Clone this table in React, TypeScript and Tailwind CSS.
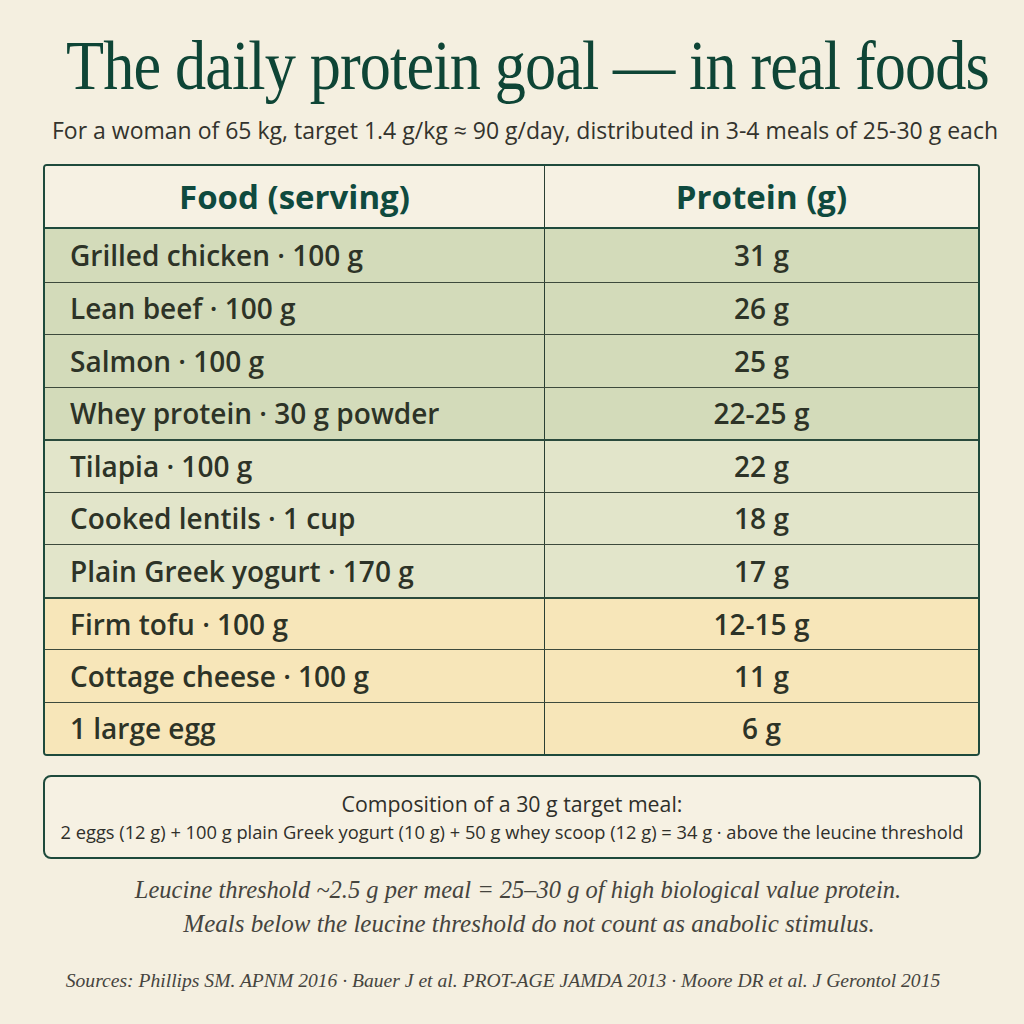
import React from "react";

const rows: { food: string; val: string; bg: string; sep?: boolean }[] = [
  { food: "Grilled chicken · 100 g", val: "31 g", bg: "bg-[#d3dbba]" },
  { food: "Lean beef · 100 g", val: "26 g", bg: "bg-[#d3dbba]" },
  { food: "Salmon · 100 g", val: "25 g", bg: "bg-[#d3dbba]" },
  { food: "Whey protein · 30 g powder", val: "22-25 g", bg: "bg-[#d3dbba]" },
  { food: "Tilapia · 100 g", val: "22 g", bg: "bg-[#e2e5ca]", sep: true },
  { food: "Cooked lentils · 1 cup", val: "18 g", bg: "bg-[#e2e5ca]" },
  { food: "Plain Greek yogurt · 170 g", val: "17 g", bg: "bg-[#e2e5ca]" },
  { food: "Firm tofu · 100 g", val: "12-15 g", bg: "bg-[#f7e6b9]", sep: true },
  { food: "Cottage cheese · 100 g", val: "11 g", bg: "bg-[#f7e6b9]" },
  { food: "1 large egg", val: "6 g", bg: "bg-[#f7e6b9]" },
];

export default function App() {
  return (
    <div className="w-[1024px] h-[1024px] bg-[#f4efe0] flex flex-col items-center overflow-hidden">
      <h1 className="mt-[28px] whitespace-nowrap text-[70px] leading-[76px] text-[#0e4536] font-['Liberation_Serif',serif] tracking-[-1px] inline-block scale-x-[0.89] ml-[30px]">
        The daily protein goal — in real foods
      </h1>
      <p className="mt-[12px] ml-[26px] whitespace-nowrap text-[23px] leading-[28px] font-medium text-[#33332d] font-['Open_Sans',sans-serif]">
        For a woman of 65 kg, target 1.4 g/kg ≈ 90 g/day, distributed in 3-4 meals of 25-30 g each
      </p>

      <div className="mt-[20px] w-[937px] ml-[-1px] border-2 border-[#1e4a3c] rounded-[4px] overflow-hidden font-['Open_Sans',sans-serif]">
        <div className="flex h-[63px] bg-[#f6f1e3] border-b-2 border-[#1e4a3c]">
          <div className="w-[500px] border-r-[1.5px] border-[#2a3f33] flex items-center justify-center text-[33px] font-bold text-[#0f4a3e]">
            Food (serving)
          </div>
          <div className="flex-1 flex items-center justify-center text-[33px] font-bold text-[#0f4a3e]">
            Protein (g)
          </div>
        </div>
        {rows.map((r, i) => (
          <div
            key={i}
            className={`flex h-[52.5px] ${r.bg} ${
              i === 0 ? "" : r.sep ? "border-t-2 border-[#2a4a3c]" : "border-t-[1.5px] border-[#3d4a3c]"
            }`}
          >
            <div className="w-[500px] border-r-[1.5px] border-[#2a3f33] flex items-center pl-[25px] text-[28px] font-semibold text-[#2d3327]">
              {r.food}
            </div>
            <div className="flex-1 flex items-center justify-center text-[28px] font-semibold text-[#2d3327]">
              {r.val}
            </div>
          </div>
        ))}
      </div>

      <div className="mt-[19px] w-[938px] h-[84px] border-2 border-[#1e4a3c] rounded-[8px] bg-[#f6f1e3] flex flex-col items-center justify-center font-['Open_Sans',sans-serif] font-medium text-[#2f2f2a]">
        <div className="text-[21.3px] leading-[30px]">Composition of a 30 g target meal:</div>
        <div className="whitespace-nowrap text-[18.3px] leading-[26px]">
          2 eggs (12 g) + 100 g plain Greek yogurt (10 g) + 50 g whey scoop (12 g) = 34 g · above the leucine threshold
        </div>
      </div>

      <div className="mt-[14px] flex flex-col items-center font-['Liberation_Serif',serif] italic text-[#45443e] text-[24.5px] leading-[34px] whitespace-nowrap">
        <div className="ml-[12px]">Leucine threshold ~2.5 g per meal = 25–30 g of high biological value protein.</div>
        <div className="ml-[34px] text-[25px]">Meals below the leucine threshold do not count as anabolic stimulus.</div>
      </div>

      <div className="mt-[28px] ml-[-18px] whitespace-nowrap font-['Liberation_Serif',serif] italic text-[#45443e] text-[19.6px] leading-[24px]">
        Sources: Phillips SM. APNM 2016 · Bauer J et al. PROT-AGE JAMDA 2013 · Moore DR et al. J Gerontol 2015
      </div>
    </div>
  );
}
